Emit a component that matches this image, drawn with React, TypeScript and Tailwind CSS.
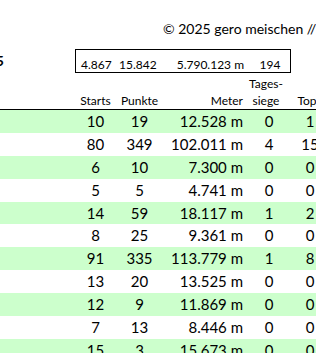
import React from "react";

const rows: string[][] = [
  ["10", "19", "12.528 m", "0", "1"],
  ["80", "349", "102.011 m", "4", "15"],
  ["6", "10", "7.300 m", "0", "0"],
  ["5", "5", "4.741 m", "0", "0"],
  ["14", "59", "18.117 m", "1", "2"],
  ["8", "25", "9.361 m", "0", "0"],
  ["91", "335", "113.779 m", "1", "8"],
  ["13", "20", "13.525 m", "0", "0"],
  ["12", "9", "11.869 m", "0", "0"],
  ["7", "13", "8.446 m", "0", "0"],
  ["15", "3", "15.673 m", "0", "0"],
];

export default function App() {
  return (
    <div className="w-[316px] h-[353px] overflow-hidden bg-white text-black font-['Lato',sans-serif]">
      <div className="h-[37px] pt-[21px] pl-[163px] text-[14px] leading-[16px] whitespace-nowrap">
        © 2025 gero meischen //
      </div>

      <div className="flex h-[24px] mt-[12px]">
        <div className="w-[4px] shrink-0 overflow-hidden flex justify-end">
          <span className="shrink-0 whitespace-nowrap font-bold text-[14px] leading-[14px] mt-[5px]">
            Saison 2025
          </span>
        </div>
        <div className="ml-[71px] w-[216px] h-[24px] shrink-0 border border-black flex items-end text-[12px] leading-[14px] pb-[0.5px] whitespace-nowrap">
          <span className="w-[43px] shrink-0 pl-[5px]">4.867</span>
          <span className="w-[45px] shrink-0">15.842</span>
          <span className="w-[80px] shrink-0 text-right">5.790.123 m</span>
          <span className="flex-1 text-center pl-[6px]">194</span>
        </div>
      </div>

      <div className="flex h-[37px] border-b border-black items-end text-[12px] leading-[17px] whitespace-nowrap">
        <div className="w-[76px] shrink-0" />
        <div className="w-[39px] shrink-0 text-center">Starts</div>
        <div className="w-[49px] shrink-0 text-center">Punkte</div>
        <div className="w-[82px] shrink-0 text-right pr-[3px]">Meter</div>
        <div className="w-[46px] shrink-0 text-center pr-[6px]">
          Tages-
          <br />
          siege
        </div>
        <div className="w-[36px] shrink-0 text-center pr-[6px]">Top</div>
      </div>

      {rows.map((r, i) => (
        <div
          key={i}
          className={
            i % 2 === 0
              ? "flex h-[22.9px] leading-[22.9px] text-[15px] whitespace-nowrap bg-[#ccffcc]"
              : "flex h-[22.9px] leading-[22.9px] text-[15px] whitespace-nowrap bg-white"
          }
        >
          <div className="w-[76px] shrink-0" />
          <div className="w-[39px] shrink-0 text-center">{r[0]}</div>
          <div className="w-[49px] shrink-0 text-center">{r[1]}</div>
          <div className="w-[82px] shrink-0 text-right pr-[3px]">{r[2]}</div>
          <div className="w-[46px] shrink-0 text-center">{r[3]}</div>
          <div className="w-[36px] shrink-0 text-center">{r[4]}</div>
        </div>
      ))}
    </div>
  );
}
